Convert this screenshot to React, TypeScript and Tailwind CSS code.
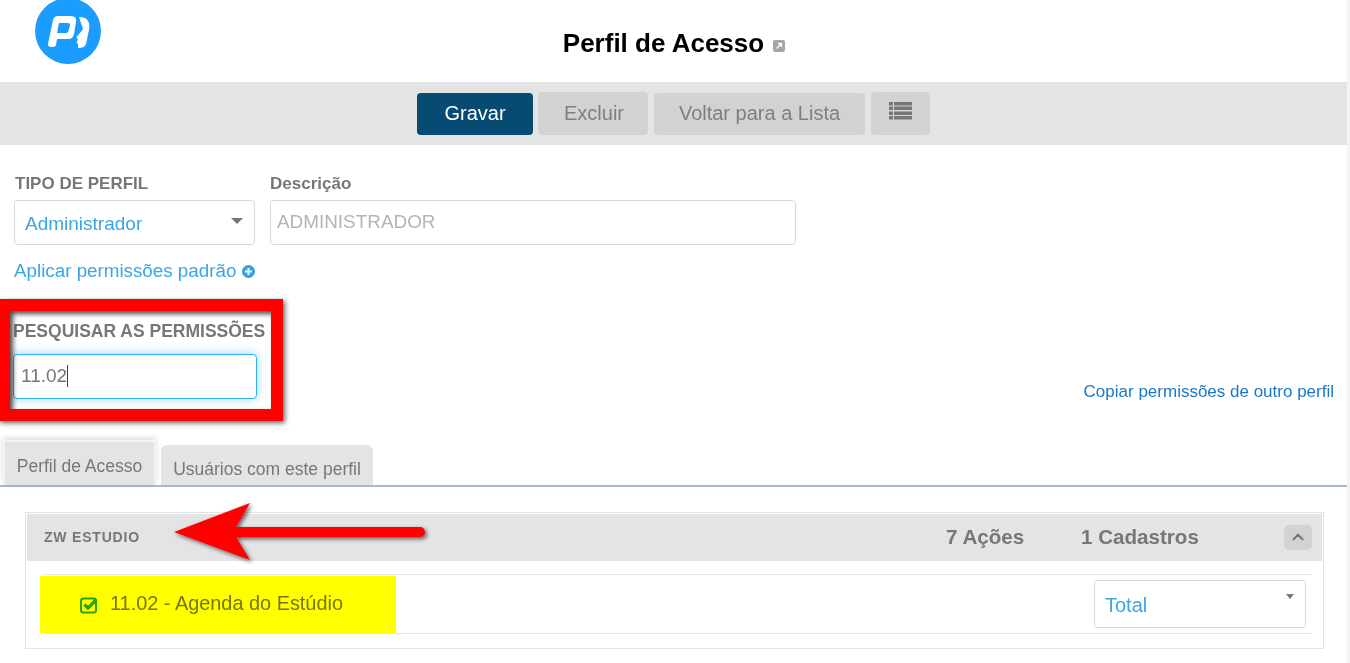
import { ChevronUp } from "lucide-react";

const Caret = ({ className }: { className: string }) => (
  <span className={`w-0 h-0 border-x-transparent border-t-[#777] ${className}`} />
);

const Logo = () => (
  <svg width="66" height="66" viewBox="0 0 66 66" className="block">
    <circle cx="33" cy="33" r="33" fill="#1b9cff" />
    <path
      d="M18 22 Q19 18 23 18 H36 Q42 18 41 24 L39 36 Q38 41 33 41 H22 L21 47 Q20.500 49 17 49 Q12.500 49 13 46 Z M24 25 L22 35 H31 Q33 35 33.500 33 L35 27 Q35.300 25 33 25 Z"
      fill="#fff"
      fillRule="evenodd"
    />
    <path
      d="M44 19 Q51 19 53 23 Q55 26 54 32 L51 46 Q50 50 43 50 L43 46 L41.500 44 L43 42 L41.500 39 L45 35 L48 31 Z"
      fill="#fff"
    />
  </svg>
);

const ListIcon = () => (
  <svg width="23" height="18" viewBox="0 0 23 18" fill="#777" className="block">
    <rect x="0" y="0" width="4" height="3.500" />
    <rect x="5" y="0" width="18" height="3.500" />
    <rect x="0" y="4.500" width="4" height="3.500" />
    <rect x="5" y="4.500" width="18" height="3.500" />
    <rect x="0" y="9.500" width="4" height="3.500" />
    <rect x="5" y="9.500" width="18" height="3.500" />
    <rect x="0" y="14" width="4" height="3.500" />
    <rect x="5" y="14" width="18" height="3.500" />
  </svg>
);

export default function App() {
  return (
    <div className="relative w-[1350px] h-[663px] overflow-hidden bg-white font-['Liberation_Sans',Arial,sans-serif] text-[#777]">
      <div className="w-[1347px] h-[663px] relative">
        {/* Header */}
        <div className="h-[82px] relative">
          <div className="absolute left-[35px] top-[-2px]">
            <Logo />
          </div>
          <div className="w-full flex justify-center items-center gap-[9px] pt-[28px] pl-px">
            <h1 className="text-[26px] leading-[30px] font-bold text-black">Perfil de Acesso</h1>
            <span className="mt-[6px] w-3 h-3 rounded-[2px] bg-[#a6a6a6] flex items-center justify-center">
              <svg width="8" height="8" viewBox="0 0 8 8">
                <path d="M1.500 6.500 L6 2 M3 1.500 H6.500 V5" stroke="#fff" strokeWidth="1.400" fill="none" />
              </svg>
            </span>
          </div>
        </div>

        {/* Toolbar */}
        <div className="h-[63px] bg-[#e4e4e4] flex justify-center items-center">
          <div className="flex items-center ml-[-1px]">
            <button className="w-[116px] h-[42px] rounded-[4px] bg-[#074a72] text-white text-[20px] pl-px pb-[2px]">Gravar</button>
            <button className="w-[110px] h-[43px] rounded-[4px] bg-[#d3d2d1] text-[#807f7f] text-[20px] ml-[5px] pl-[3px] pb-[2px]">Excluir</button>
            <button className="w-[211px] h-[42px] rounded-[4px] bg-[#d3d2d1] text-[#807f7f] text-[20px] ml-[6px] pl-px pb-[2px]">Voltar para a Lista</button>
            <button className="w-[59px] h-[43px] rounded-[4px] bg-[#d3d2d1] ml-[6px] flex items-center justify-center pb-[5px]">
              <ListIcon />
            </button>
          </div>
        </div>

        {/* Form */}
        <div className="flex gap-[15px] pl-[14px] pt-[30px]">
          <div className="w-[241px]">
            <label className="block text-[17px] leading-[18px] font-bold text-[#777] pl-px">TIPO DE PERFIL</label>
            <div className="mt-[7px] h-[45px] border border-[#d9d9d9] rounded-[4px] flex items-center justify-between pl-[10px] pr-[11px]">
              <span className="text-[19px] text-[#3aa6e3] mt-[3px]">Administrador</span>
              <Caret className="border-x-[6px] border-t-[6px] mt-[-3px]" />
            </div>
          </div>
          <div className="w-[526px]">
            <label className="block text-[17px] leading-[18px] font-bold text-[#777]">Descrição</label>
            <div className="mt-[7px] h-[45px] border border-[#d9d9d9] rounded-[4px] flex items-center pl-[6px]">
              <span className="text-[18.900px] text-[#b4b4b4] mt-[-1px]">ADMINISTRADOR</span>
            </div>
          </div>
        </div>
        <a className="ml-[14px] mt-[15px] h-[22px] flex items-center gap-[6px] text-[18.800px] text-[#3aa6e3]">
          Aplicar permissões padrão
          <svg width="13" height="13" viewBox="0 0 13 13" className="mt-[1px]">
            <circle cx="6.500" cy="6.500" r="6.500" fill="#2ea3e3" />
            <path d="M6.500 3 V10 M3 6.500 H10" stroke="#fff" strokeWidth="2" />
          </svg>
        </a>

        {/* Search */}
        <div className="flex justify-between items-end pl-[13px] pr-[13px] mt-[40px]">
          <div className="w-[244px]">
            <label className="block text-[17.500px] leading-[18px] font-bold whitespace-nowrap text-[#777]">PESQUISAR AS PERMISSÕES</label>
            <div className="mt-[14px] h-[45px] border border-[#2fb0ec] rounded-[4px] flex items-center pl-[7px] shadow-[0_0_10px_rgba(102,190,240,0.7)]">
              <span className="text-[19px] text-[#777] mt-[-1px]">11.02</span>
              <span className="w-px h-[22px] bg-[#444] mt-[-1px]" />
            </div>
          </div>
          <a className="text-[17px] leading-[20px] text-[#1b78c8] mb-[-3px]">Copiar permissões de outro perfil</a>
        </div>

        {/* Tabs */}
        <div className="mt-[41px] h-[47px] border-b-2 border-[#a9b9cc] flex items-end pl-[3px] gap-[5px]">
          <div className="w-[153px] h-[45px] bg-[#e4e4e4] border-[2px] border-b-0 border-[#f3f3f3] shadow-[0_-2px_6px_rgba(0,0,0,0.15)] flex items-center justify-center pt-[6px] text-[17.500px] text-[#777]">
            Perfil de Acesso
          </div>
          <div className="w-[212px] h-[40px] bg-[#e4e4e4] rounded-t-[6px] flex items-center justify-center pt-[9px] text-[17.500px] text-[#777]">
            Usuários com este perfil
          </div>
        </div>

        {/* Panel */}
        <div className="mt-[25px] ml-[25px] w-[1299px] h-[137px] border border-[#e2e4e4] p-px">
          <div className="h-[47px] bg-[#e4e4e4] flex items-center pl-[17px] pr-[10px]">
            <span className="text-[14px] font-bold tracking-[0.8px] text-[#777]">ZW ESTUDIO</span>
            <div className="ml-auto flex items-center text-[20.600px] font-bold text-[#777]">
              <span className="w-[135px]">7 Ações</span>
              <span className="w-[203px]">1 Cadastros</span>
              <span className="w-[28px] h-[25px] rounded-[5px] bg-[#d3d2d1] flex items-center justify-center">
                <ChevronUp size={18} strokeWidth={3} />
              </span>
            </div>
          </div>
          <div className="ml-[17px] mt-[13px] w-[1267px] h-[60px] border-y border-[#dde7e5] flex items-center justify-between pr-[5px] pl-[36px]">
            <div className="flex items-center gap-[12px]">
              <svg width="18" height="18" viewBox="0 0 18 18" className="mt-[2px]">
                <rect x="1" y="2.500" width="15" height="14" rx="2.500" fill="none" stroke="#2aa618" strokeWidth="2" />
                <path d="M4.500 8.500 L8 12 L16.500 3.500" fill="none" stroke="#2aa618" strokeWidth="3.200" />
              </svg>
              <span className="text-[19.900px] text-[#777]">11.02 - Agenda do Estúdio</span>
            </div>
            <div className="w-[212px] h-[48px] border border-[#d9d9d9] rounded-[4px] flex justify-between pl-[10px] pr-[11px] my-[-7px]">
              <span className="text-[20px] text-[#3aa6e3] mt-[9px]">Total</span>
              <Caret className="border-x-[4px] border-t-[5px] mt-[13px]" />
            </div>
          </div>
        </div>

        {/* Annotations */}
        <div className="absolute left-[-2px] top-[299px] w-[285px] h-[122px] border-[12px] border-[#ff0000] shadow-[2px_2px_5px_rgba(0,0,0,0.6),inset_3px_3px_5px_rgba(0,0,0,0.7)]" />
        <div className="absolute left-[40px] top-[576px] w-[356px] h-[57px] bg-[#ffff00] mix-blend-multiply" />
        <svg width="270" height="70" viewBox="0 0 270 70" className="absolute left-[170px] top-[498px] overflow-visible">
          <defs>
            <filter id="arrow-shadow" x="-10%" y="-20%" width="120%" height="150%">
              <feDropShadow dx="2" dy="2" stdDeviation="2" floodColor="#000" floodOpacity="0.6" />
            </filter>
          </defs>
          <path
            d="M4 34 L80 5 L66 29 H250 A5 5 0 0 1 250 39 H66 L80 62 Z"
            fill="#ff0000"
            filter="url(#arrow-shadow)"
          />
        </svg>
      </div>
      <div className="absolute right-0 top-0 w-[3px] h-full bg-[#f4f4f4]" />
    </div>
  );
}
